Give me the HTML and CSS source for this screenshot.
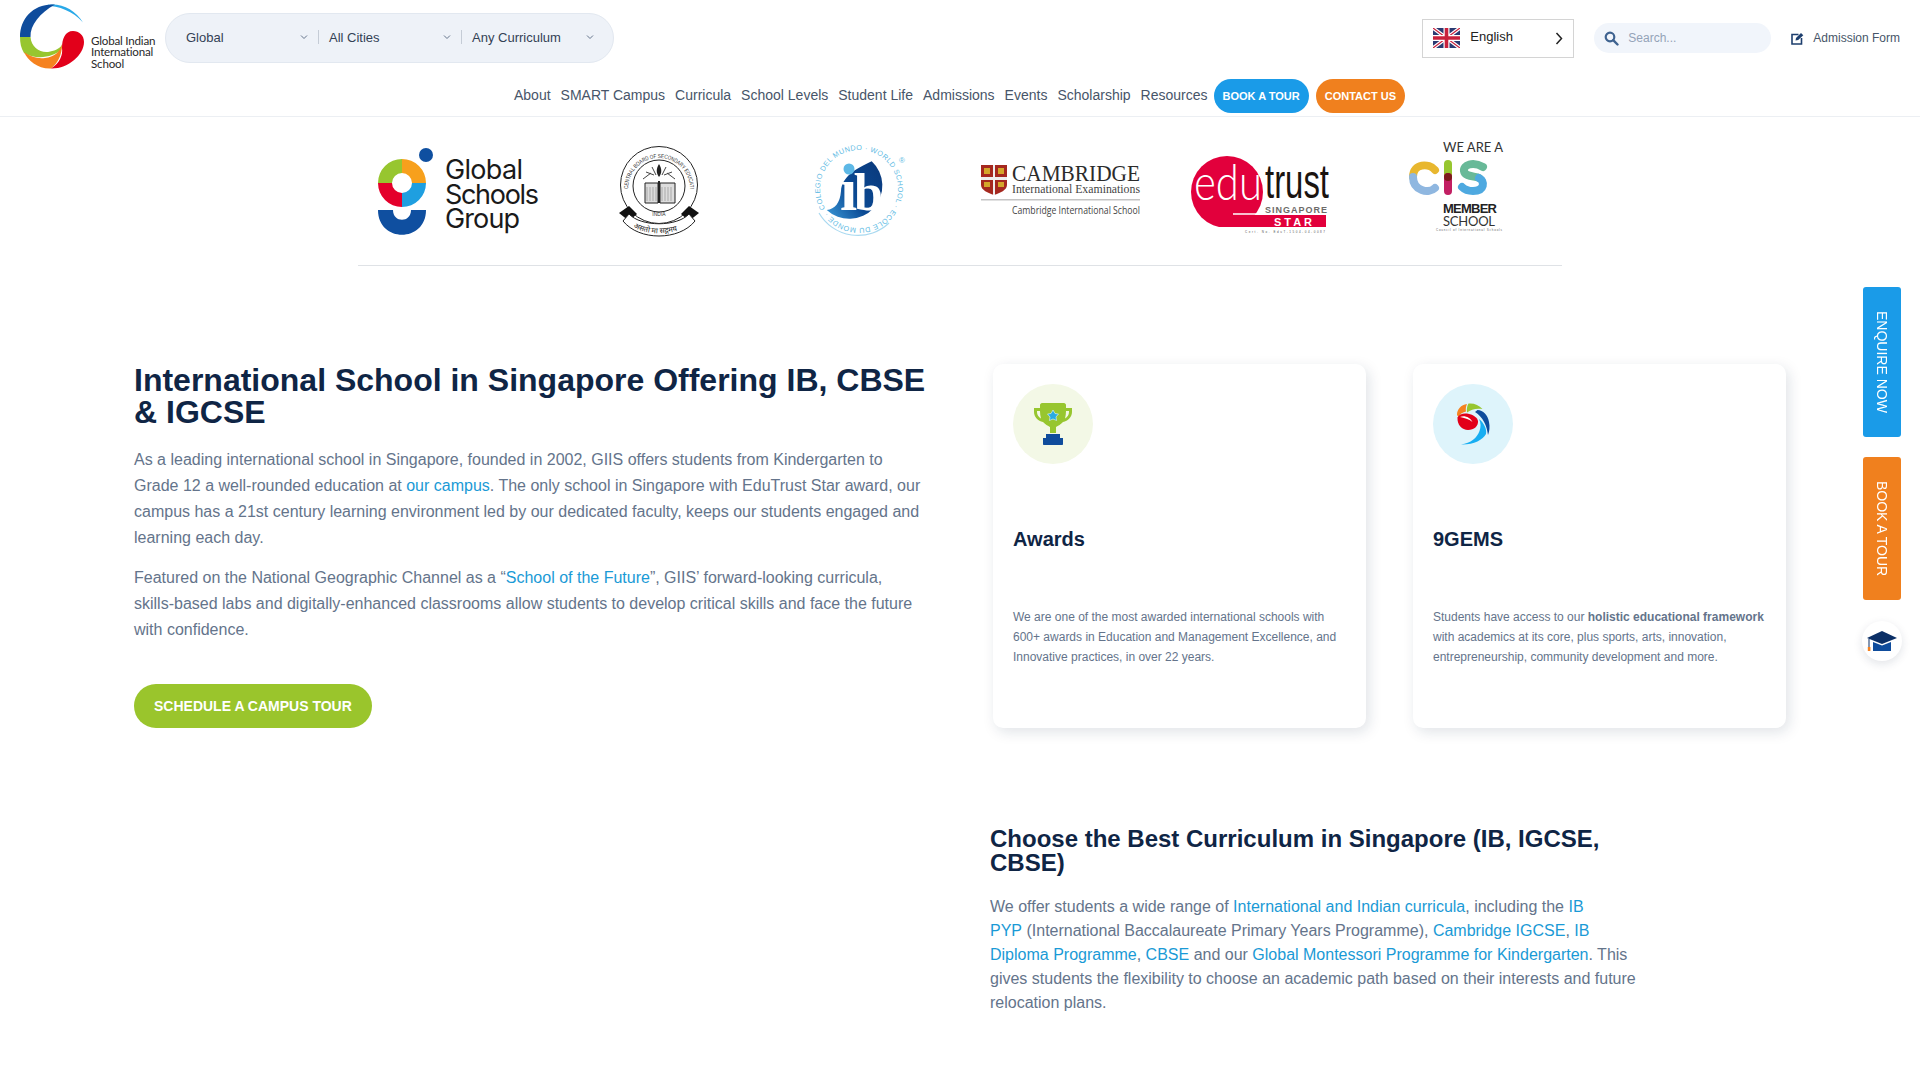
FILE: index.html
```html
<!DOCTYPE html>
<html lang="en">
<head>
<meta charset="utf-8">
<title>Global Indian International School</title>
<link rel="stylesheet" href="styles.css">
</head>
<body>
<header class="site-header">
  <div class="top-row">
    <a class="brand" href="#">
      <svg class="brand-mark" width="70" height="70" viewBox="0 0 70 70">
        <path d="M65 19.500C58 8 46 1 33 1.500C31 1.600 29 2 27.500 2.500C41 3 55 8 65 19.500Z" fill="#29a9e8"/>
        <path d="M37 1.500C16 0 2 15 2 34L12.500 34C12 22 22 10 37 1.500Z" fill="#0f4c9c"/>
        <path d="M2 34L12.500 34C13 44 22 50 30 49C36 48 41 46 44 42L43 47C36 53 20 58 6 50C3 45 2 40 2 34Z" fill="#97c62f"/>
        <path d="M44 41C44 52 40 60 33 65.500C20 66 10 58 6 49C13 54 20 56 27 55C36 54 42 49 44 41Z" fill="#f58220"/>
        <path d="M55 28C61 28 66 32 66 39C66 52 50 66 33 65.500C42 60 45 52 44 45C44 36 47 28 55 28Z" fill="#e2001a"/>
      </svg>
      <span class="brand-name">Global Indian<br>International<br>School</span>
    </a>
    <div class="filters">
      <div class="filter"><span>Global</span><svg class="caret" width="8" height="6" viewBox="0 0 8 6"><path d="M1 1.500L4 4.500L7 1.500" fill="none" stroke="#64748b" stroke-width="1"/></svg></div>
      <i class="filter-sep"></i>
      <div class="filter"><span>All Cities</span><svg class="caret" width="8" height="6" viewBox="0 0 8 6"><path d="M1 1.500L4 4.500L7 1.500" fill="none" stroke="#64748b" stroke-width="1"/></svg></div>
      <i class="filter-sep"></i>
      <div class="filter"><span>Any Curriculum</span><svg class="caret" width="8" height="6" viewBox="0 0 8 6"><path d="M1 1.500L4 4.500L7 1.500" fill="none" stroke="#64748b" stroke-width="1"/></svg></div>
    </div>
    <div class="lang">
      <svg class="flag" width="27" height="20" viewBox="0 0 27 20">
        <rect width="27" height="20" fill="#2b3a72"/>
        <path d="M0 0L27 20M27 0L0 20" stroke="#fff" stroke-width="3.600"/>
        <path d="M0 0L27 20M27 0L0 20" stroke="#c8203c" stroke-width="1.200"/>
        <path d="M13.500 0V20M0 10H27" stroke="#fff" stroke-width="6"/>
        <path d="M13.500 0V20M0 10H27" stroke="#c8203c" stroke-width="3.600"/>
      </svg>
      <span class="lang-name">English</span>
      <svg class="lang-arrow" width="8" height="13" viewBox="0 0 8 13"><path d="M1.500 1L6.500 6.500L1.500 12" fill="none" stroke="#222" stroke-width="1.500"/></svg>
    </div>
    <div class="search">
      <svg width="15" height="15" viewBox="0 0 15 15"><circle cx="6" cy="6" r="4.300" fill="none" stroke="#3f6390" stroke-width="2.200"/><path d="M9.200 9.200L13.500 13.500" stroke="#3f6390" stroke-width="2.400" stroke-linecap="round"/></svg>
      <span class="search-text">Search...</span>
    </div>
    <a class="admission" href="#">
      <svg width="13" height="13" viewBox="0 0 13 13"><path d="M7.500 2.500H1V12H10.500V6" fill="none" stroke="#1e3f6e" stroke-width="1.600"/><path d="M4.500 8.500L5 6L10 1L12.300 3.200L7.200 8Z" fill="#1e3f6e"/></svg>
      <span>Admission Form</span>
    </a>
  </div>
  <nav class="nav-row">
    <a class="nav-link" href="#">About</a><a class="nav-link" href="#">SMART Campus</a><a class="nav-link" href="#">Curricula</a><a class="nav-link" href="#">School Levels</a><a class="nav-link" href="#">Student Life</a><a class="nav-link" href="#">Admissions</a><a class="nav-link" href="#">Events</a><a class="nav-link" href="#">Scholarship</a><a class="nav-link" href="#">Resources</a>
    <a class="nav-btn nav-btn-blue" href="#">BOOK A TOUR</a><a class="nav-btn nav-btn-orange" href="#">CONTACT US</a>
  </nav>
</header>

<section class="logos">
  <svg class="logo" width="200" height="148" viewBox="0 0 200 148">
    <path d="M44 42A24 24 0 0 1 68 66H54A10 10 0 0 0 44 56Z" fill="#f7a01c"/>
    <path d="M20 66A24 24 0 0 1 44 42V56A10 10 0 0 0 34 66Z" fill="#97c62f"/>
    <path d="M44 90A24 24 0 0 1 20 66H34A10 10 0 0 0 44 76Z" fill="#e4002b"/>
    <path d="M68 66A24 24 0 0 1 44 90V76A10 10 0 0 0 54 66Z" fill="#1f9fe0"/>
    <circle cx="68" cy="38" r="7" fill="#0f4fa0"/>
    <path d="M20 93H35C35 106 53 106 53 93H68C68 126 20 126 20 93Z" fill="#0f4fa0"/>
    <g class="gsg-text"><text x="87" y="62" textLength="78">Global</text><text x="87" y="87" textLength="94">Schools</text><text x="87" y="111" textLength="75">Group</text></g>
  </svg>
  <svg class="logo" width="200" height="148" viewBox="0 0 200 148">
    <defs>
      <path id="cbse-arc" d="M69 72A31 31 0 1 1 131 72"/>
      <path id="cbse-motto" d="M71 108C85 119 115 119 129 108"/>
    </defs>
    <circle cx="100" cy="68" r="38.500" fill="#fff" stroke="#222" stroke-width="1"/>
    <circle cx="100" cy="69" r="26" fill="#fff" stroke="#222" stroke-width="1"/>
    <text class="cbse-ring"><textPath href="#cbse-arc" textLength="104" lengthAdjust="spacingAndGlyphs">CENTRAL BOARD OF SECONDARY EDUCATION</textPath></text>
    <path d="M86 66H99V86H86ZM101 66H116V86H101Z" fill="#ddd" stroke="#222" stroke-width="1"/>
    <path d="M88 70V84M91 70V84M94 70V84M97 70V84M103 70V84M106 70V84M109 70V84M112 70V84" stroke="#888" stroke-width=".6"/>
    <path d="M99 86V64H101V86Z" fill="#222"/>
    <path d="M100 47C103 52 103 56 100 60C97 56 97 52 100 47Z" fill="#222"/>
    <path d="M84 62L92 56M87 55L95 58M93 50L97 58M107 50L103 58M113 55L105 58M116 62L108 56" stroke="#444" stroke-width="1"/>
    <text class="cbse-india" x="100" y="99">INDIA</text>
    <path d="M70 89L60 96L70 104L78 97Z" fill="#111"/>
    <path d="M130 89L140 96L130 104L122 97Z" fill="#111"/>
    <path d="M70 97C82 110 118 110 130 97L136 104C120 124 80 124 64 104Z" fill="#fff" stroke="#222" stroke-width="1"/>
    <text class="cbse-motto"><textPath href="#cbse-motto" startOffset="4">असतो मा सद्गमय</textPath></text>
  </svg>
  <svg class="logo" width="200" height="148" viewBox="0 0 200 148">
    <defs>
      <path id="ib-arc" d="M66.200 91.500A39 39 0 1 1 133.800 91.500A39 39 0 0 1 66.200 91.500"/>
      <linearGradient id="ib-blue" x1="0" y1="1" x2="1" y2="0.300"><stop offset="0" stop-color="#3a9ad9"/><stop offset="0.500" stop-color="#0b4a94"/><stop offset="1" stop-color="#0a3c80"/></linearGradient>
    </defs>
    <path d="M60 96A45 45 0 0 0 130 106" fill="none" stroke="#a9d9f0" stroke-width="1.200"/>
    <text class="ib-ring"><textPath href="#ib-arc" textLength="240">COLEGIO DEL MUNDO · WORLD SCHOOL · ECOLE DU MONDE ·</textPath></text>
    <text class="ib-reg" x="140" y="46">®</text>
    <path d="M112.700 44.300A32 32 0 1 1 67.700 93C76 92 81 86 82 74C83 60 96 52 112.700 44.300Z" fill="url(#ib-blue)"/>
    <circle cx="90" cy="52" r="5.500" fill="#5db8e6"/>
    <text class="ib-i" x="81" y="93">ı</text>
    <text class="ib-b" x="95" y="93">b</text>
  </svg>
  <svg class="logo" width="200" height="148" viewBox="0 0 200 148">
    <path d="M21 48H47V68C47 73 40 76 34 78C28 76 21 73 21 68Z" fill="#a5281f"/>
    <path d="M33 48H35V78H33ZM21 60H47V63H21Z" fill="#eee"/>
    <path d="M24 51H30V57H24ZM38 51H44V57H38ZM24 65H30V70H24ZM38 65H44V70H38Z" fill="#d4a62a"/>
    <text class="cam-main" x="52" y="64" textLength="128" lengthAdjust="spacingAndGlyphs">CAMBRIDGE</text>
    <text class="cam-sub" x="52" y="76" textLength="128" lengthAdjust="spacingAndGlyphs">International Examinations</text>
    <rect x="21" y="82" width="159" height="1.500" fill="#c4c4c4"/>
    <text class="cam-school" x="52" y="97" textLength="128" lengthAdjust="spacingAndGlyphs">Cambridge International School</text>
  </svg>
  <svg class="logo" width="200" height="148" viewBox="0 0 200 148">
    <circle cx="66" cy="75" r="36" fill="#e2003c"/>
    <rect x="66" y="98" width="99" height="12" fill="#e2003c"/>
    <path d="M72 97H165" stroke="#fff" stroke-width="1.500"/>
    <rect x="40" y="110" width="125" height="5" fill="#fff"/>
    <text class="edu-edu" x="33" y="83" textLength="68" lengthAdjust="spacingAndGlyphs">edu</text>
    <text class="edu-trust" x="104" y="81" textLength="64" lengthAdjust="spacingAndGlyphs">trust</text>
    <text class="edu-sg" x="104" y="96" textLength="62">SINGAPORE</text>
    <text class="edu-star" x="113" y="109" textLength="38">STAR</text>
    <text class="edu-tiny" x="84" y="116" textLength="80">Cert. No. EduT-1504-04-0087</text>
  </svg>
  <svg class="logo" width="200" height="148" viewBox="0 0 200 148">
    <text class="cis-top" x="82" y="35" textLength="60">WE ARE A</text>
    <path d="M74 53C68 46 52 46 52 60" fill="none" stroke="#e8b72f" stroke-width="8" stroke-linecap="round"/>
    <path d="M52 60C52 74 68 77 74 71" fill="none" stroke="#8fb7e0" stroke-width="8" stroke-linecap="round"/>
    <path d="M87 47V60" stroke="#97c62f" stroke-width="8" stroke-linecap="round"/>
    <path d="M87 60V74" stroke="#c21f63" stroke-width="8" stroke-linecap="round"/>
    <circle cx="87" cy="60" r="4" fill="#7d1b1b"/>
    <path d="M122 50C112 44 102 48 103 54C104 60 114 59 118 61" fill="none" stroke="#68b998" stroke-width="8" stroke-linecap="round"/>
    <path d="M118 61C124 64 124 74 112 74C108 74 103 72 101 70" fill="none" stroke="#4ea9e0" stroke-width="8" stroke-linecap="round"/>
    <text class="cis-member" x="82" y="96" textLength="54">MEMBER</text>
    <text class="cis-school" x="82" y="109" textLength="52">SCHOOL</text>
    <text class="cis-tiny" x="75" y="114" textLength="66">Council of International Schools</text>
  </svg>
</section>

<main class="main">
  <div class="intro">
    <h1>International School in Singapore Offering IB, CBSE &amp; IGCSE</h1>
    <p class="intro-p">As a leading international school in Singapore, founded in 2002, GIIS offers students from Kindergarten to Grade 12 a well-rounded education at <a href="#">our campus</a>. The only school in Singapore with EduTrust Star award, our campus has a 21st century learning environment led by our dedicated faculty, keeps our students engaged and learning each day.</p>
    <p class="intro-p intro-p2">Featured on the National Geographic Channel as a “<a href="#">School of the Future</a>”, GIIS’ forward-looking curricula, skills-based labs and digitally-enhanced classrooms allow students to develop critical skills and face the future with confidence.</p>
    <a class="cta" href="#">SCHEDULE A CAMPUS TOUR</a>
  </div>
  <div class="cards">
    <article class="card">
      <div class="card-icon card-icon-green">
        <svg width="80" height="80" viewBox="0 0 80 80">
          <path d="M29 19H51C52 19 53 20 53 21V24H59V28C59 33 55 37 50 38C48 40 45 42 43 43V49H37V43C35 42 32 40 30 38C25 37 21 33 21 28V24H27V21C27 20 28 19 29 19ZM24 27V28C24 31 25.500 33 28 34.500C27.300 32 27 29.500 27 27ZM56 27H53C53 29.500 52.700 32 52 34.500C54.500 33 56 31 56 28Z" fill="#97c62f" fill-rule="evenodd"/>
          <path d="M40 26L42 29.500L45.500 30L43 33L43.600 36.500L40 35L36.400 36.500L37 33L34.500 30L38 29.500Z" fill="#29abe2" stroke="#e6f6ff" stroke-width=".6"/>
          <path d="M33 50H47V54H50V60C50 60.600 49.600 61 49 61H31C30.400 61 30 60.600 30 60V54H33Z" fill="#0f4c9c"/>
        </svg>
      </div>
      <h3>Awards</h3>
      <p>We are one of the most awarded international schools with 600+ awards in Education and Management Excellence, and Innovative practices, in over 22 years.</p>
    </article>
    <article class="card">
      <div class="card-icon card-icon-blue">
        <svg width="80" height="80" viewBox="0 0 80 80">
          <path d="M34 20C28 21 24 25 24 31L25.500 33C27 30 30 28 33 27.500C32.500 25 33 22 34 20Z" fill="#f58220"/>
          <path d="M35.500 19.500C41 19 46 21 49.500 25C44 24 38 25 34 28.500C33.500 25 34 22 35.500 19.500Z" fill="#97c62f"/>
          <path d="M44.500 26C50 26 55 31 56 38C57 43 56.500 47 55 51C54 42 50 33 42 28Z" fill="#0f4c9c"/>
          <path d="M46 35C51 39 54 45 53 50C50 56 40 61 28 60.500C38 59 44 54 46.500 47C48 43 48 39 46 35Z" fill="#18aef2"/>
          <path d="M24.500 33.500C26 30 30 29 34 29.500C40 30.500 44 33 45 37C45.500 42 41 46 35 46C29 46 24 41 24.500 33.500Z" fill="#e2001a"/>
          <path d="M27 33C31 31 37 33 39.500 38C36 35 31 34 27 33Z" fill="#fff"/>
        </svg>
      </div>
      <h3>9GEMS</h3>
      <p>Students have access to our <strong>holistic educational framework</strong> with academics at its core, plus sports, arts, innovation, entrepreneurship, community development and more.</p>
    </article>
  </div>
  <div class="curriculum">
    <h2>Choose the Best Curriculum in Singapore (IB, IGCSE, CBSE)</h2>
    <p>We offer students a wide range of <a href="#">International and Indian curricula</a>, including the <a href="#">IB PYP</a>&nbsp;(International Baccalaureate Primary Years Programme), <a href="#">Cambridge IGCSE</a>, <a href="#">IB Diploma Programme</a>, <a href="#">CBSE</a> and our <a href="#">Global Montessori Programme for Kindergarten</a>. This gives students the flexibility to choose an academic path based on their interests and future relocation plans.</p>
  </div>
</main>

<aside class="side">
  <a class="side-tab side-tab-blue" href="#">ENQUIRE NOW</a>
  <a class="side-tab side-tab-orange" href="#">BOOK A TOUR</a>
  <a class="side-cap" href="#">
    <svg width="32" height="22" viewBox="0 0 32 22">
      <path d="M16 1L31 8L16 14L1 8Z" fill="#0b2f66"/>
      <path d="M7 12L16 15.500L25 12V21H7Z" fill="#0f4c9c"/>
      <path d="M3 9V18" stroke="#0b2f66" stroke-width="1"/>
      <rect x="1.800" y="17" width="2.600" height="4" fill="#f58220"/>
    </svg>
  </a>
</aside>
</body>
</html>
```

FILE: styles.css
```css
* { box-sizing: border-box; }
html, body { margin: 0; padding: 0; }
body { font-family: "Liberation Sans", Arial, sans-serif; color: #64748b; background: #fff; overflow-x: hidden; }
a { text-decoration: none; color: inherit; }

/* header */
.site-header { border-bottom: 1px solid #eceff3; height: 117px; }
.top-row { display: flex; align-items: center; height: 76px; padding: 0 20px 0 18px; }
.brand { display: flex; align-items: flex-end; width: 147px; height: 70px; }
.brand-mark { flex: none; }
.brand-name { font-family: Lato, sans-serif; font-size: 11.600px; line-height: 11.500px; color: #2a2a2a; margin: 0 0 4px 3px; white-space: nowrap; letter-spacing: -.2px; }
.filters { display: flex; align-items: center; width: 449px; height: 50px; padding: 0 0 2px 10px; background: #eef2f8; border: 1px solid #e2e8f0; border-radius: 25px; margin-right: auto; }
.filter { display: flex; align-items: center; justify-content: space-between; width: 122px; margin: 0 10px; font-size: 13px; color: #334155; }
.filter-sep { width: 1px; height: 14px; background: #c5ccd6; flex: none; }
.caret { flex: none; }
.lang { display: flex; align-items: center; width: 152px; height: 39px; border: 1px solid #d4d4d4; padding: 0 10px; font-size: 13px; color: #222; }
.lang-name { margin: -3px auto 0 10px; }
.flag { flex: none; }
.search { display: flex; align-items: center; gap: 9px; width: 177px; height: 30px; margin-left: 20px; padding-left: 10px; background: #f1f5fb; border-radius: 15px; }
.search-text { font-size: 12px; color: #94a3b8; }
.admission { display: flex; align-items: center; gap: 9px; margin-left: 20px; font-size: 12px; color: #475569; }

.nav-row { display: flex; justify-content: center; align-items: center; height: 34px; margin-top: 3px; padding-right: 1px; gap: 10px; font-size: 14px; color: #475569; }
.nav-link { padding-bottom: 2px; }
.nav-btn { display: flex; align-items: center; height: 34px; padding: 0 9px; border-radius: 17px; font-size: 11px; font-weight: 700; color: #fff; margin-left: -3px; }
.nav-btn-blue { background: #1a9be8; margin-left: -4px; }
.nav-btn-orange { background: #f0801e; }

/* accreditation logos */
.logos { display: grid; grid-template-columns: repeat(6, 1fr); width: 1204px; height: 149px; margin: 0 auto; border-bottom: 1px solid #dfe2e6; }
.logo { display: block; }
.gsg-text { font-family: Inter, sans-serif; font-size: 27px; fill: #1a1a1a; }
.cbse-ring { font-size: 5.800px; fill: #333; }
.cbse-india { font-size: 5px; fill: #333; text-anchor: middle; }
.cbse-motto { font-family: "Noto Sans", sans-serif; font-size: 7.500px; fill: #222; }
.ib-ring { font-size: 7.200px; fill: #62bbe4; }
.ib-reg { font-size: 8px; fill: #62bbe4; }
.ib-i { font-family: "Liberation Serif", serif; font-weight: 700; font-size: 62px; fill: #fff; }
.ib-b { font-family: "Liberation Serif", serif; font-weight: 700; font-size: 52px; fill: #fff; }
.cam-main { font-family: "Liberation Serif", serif; font-size: 23px; fill: #2b2b2b; }
.cam-sub { font-family: "Liberation Serif", serif; font-size: 12.500px; fill: #444; }
.cam-school { font-family: "Open Sans", sans-serif; font-size: 10px; fill: #444; }
.edu-edu { font-family: Lato, sans-serif; font-weight: 300; font-size: 50px; fill: #fff; }
.edu-trust { font-family: "Liberation Sans", sans-serif; font-size: 48px; fill: #1a1410; }
.edu-sg { font-size: 9px; font-weight: 700; fill: #6d6a68; }
.edu-star { font-size: 11px; font-weight: 700; fill: #fff; }
.edu-tiny { font-size: 3px; fill: #555; }
.cis-top { font-family: Lato, sans-serif; font-size: 13px; fill: #333; }
.cis-member { font-size: 13px; font-weight: 700; fill: #222; }
.cis-school { font-family: Lato, sans-serif; font-size: 13px; fill: #333; }
.cis-tiny { font-size: 3px; fill: #666; }

/* main */
.main { display: grid; grid-template-columns: 796px 796px; column-gap: 60px; row-gap: 99px; margin: 98px 0 0 134px; }
h1 { margin: 0; font-size: 32px; line-height: 32px; font-weight: 700; color: #0f2545; }
.intro-p { margin: 19px 0 0; max-width: 790px; font-size: 16px; line-height: 26px; }
.intro-p2 { margin-top: 14px; }
.intro-p a, .curriculum a { color: #1a9ad6; }
.cta { display: inline-flex; align-items: center; height: 44px; margin-top: 41px; padding: 0 20px; border-radius: 22px; background: #9ac52c; color: #fff; font-size: 14px; font-weight: 700; }

.cards { display: grid; grid-template-columns: 373px 373px; column-gap: 47px; padding-left: 3px; }
.card { height: 364px; padding: 20px; background: #fff; border-radius: 10px; box-shadow: 3px 4px 14px rgba(15, 37, 69, .13); }
.card-icon { width: 80px; height: 80px; border-radius: 50%; }
.card-icon svg { display: block; }
.card-icon-green { background: #f3f8e6; }
.card-icon-blue { background: #def4fb; }
.card h3 { margin: 63px 0 0; font-size: 20px; line-height: 24px; color: #0f2545; font-weight: 700; }
.card p { margin: 56px 0 0; font-size: 12px; line-height: 20px; color: #64748b; }

.curriculum { grid-column: 2; width: 650px; padding-bottom: 40px; }
h2 { margin: 0; font-size: 24px; line-height: 24px; font-weight: 700; color: #0f2545; }
.curriculum p { margin: 20px 0 0; font-size: 16px; line-height: 24px; }

/* floating side */
.side { position: fixed; top: 287px; left: 1863px; width: 38px; display: flex; flex-direction: column; align-items: center; }
.side-tab { display: flex; align-items: center; justify-content: center; width: 38px; writing-mode: vertical-rl; border-radius: 3px; color: #fff; font-size: 14px; }
.side-tab-blue { height: 150px; background: #1a9be8; }
.side-tab-orange { height: 143px; margin-top: 20px; background: #f0801e; }
.side-cap { display: flex; align-items: center; justify-content: center; flex: none; width: 40px; height: 40px; margin-top: 21px; border-radius: 50%; background: #fff; box-shadow: 0 3px 10px rgba(15, 37, 69, .12); }
```
